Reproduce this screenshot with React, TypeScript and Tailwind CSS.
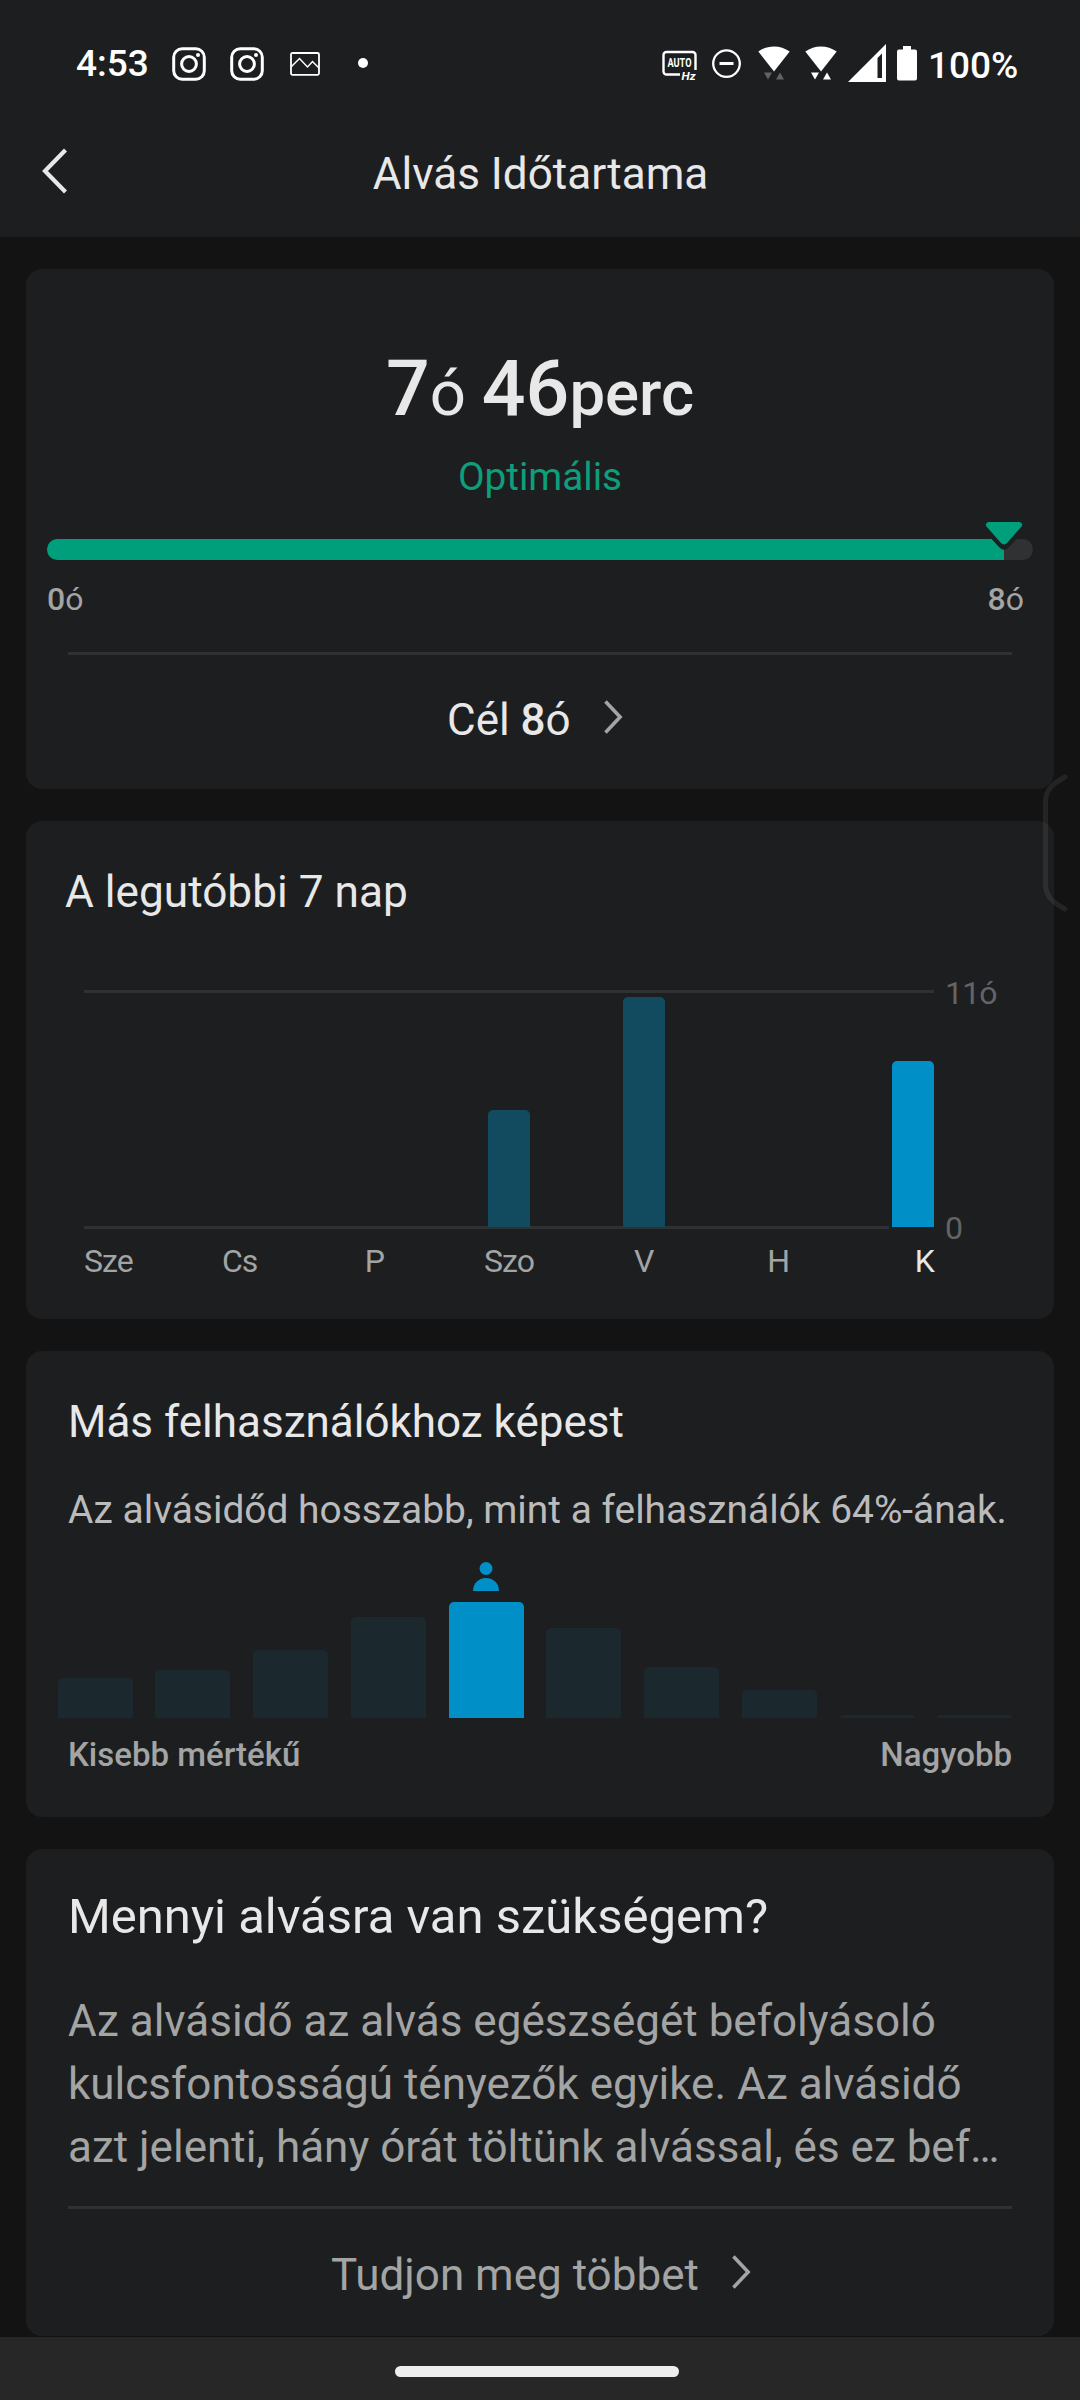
import type { ReactNode } from "react";

function InstagramIcon() {
  return (
    <svg className="h-[34px] w-[34px]" viewBox="0 0 34 34" fill="none" stroke="#fff" strokeWidth="3">
      <rect x="1.7" y="1.7" width="30.6" height="30.6" rx="8.5" />
      <circle cx="17" cy="17" r="7.4" />
      <circle cx="26" cy="8" r="2" fill="#fff" stroke="none" />
    </svg>
  );
}

function WifiIcon({ active }: { active: boolean }) {
  const arrows = active ? "#fff" : "#626365";
  return (
    <svg className="h-[34px] w-[32px]" viewBox="0 0 32 34" fill="#fff">
      <path d="M.3 5.6C9.5-1.3 22.5-1.3 31.7 5.6L16 25.4Z" />
      <path d="M6 26.5h8l-4 7Z" fill={arrows} />
      <path d="M18 33.5h8l-4-7Z" fill={arrows} />
    </svg>
  );
}

function StatusBar() {
  return (
    <div className="flex h-[126px] items-start pl-[76px] pt-[44px] text-white">
      <span className="mt-[-1px] h-[42px] w-[96px] whitespace-nowrap text-[37px] font-medium leading-[42px]">4:53</span>
      <div className="mt-[3px]">
        <InstagramIcon />
      </div>
      <div className="ml-[24px] mt-[3px]">
        <InstagramIcon />
      </div>
      <svg className="ml-[26px] mt-[8px] h-[24px] w-[30px]" viewBox="0 0 30 24" fill="none" stroke="#fff" strokeWidth="1.8">
        <rect x="1" y="1" width="28" height="21.8" rx="1.5" />
        <path d="M1 15 9.500 6.500 17.500 15 22.500 9.500 29 16" strokeWidth="1.5" />
      </svg>
      <div className="ml-[38px] mt-[14px] h-[10px] w-[10px] rounded-full bg-white" />

      <svg className="ml-[294px] mt-[6px] h-[36px] w-[36px] overflow-visible" viewBox="0 0 36 36" fill="none">
        <path d="M18 24.500H4.500a3 3 0 0 1-3-3V5a3 3 0 0 1 3-3H30.500a3 3 0 0 1 3 3V20" stroke="#fff" strokeWidth="2.400" />
        <text x="17.500" y="17.300" fill="#fff" fontSize="12.500" fontWeight="700" textAnchor="middle" textLength="24" lengthAdjust="spacingAndGlyphs" fontFamily="Roboto, sans-serif">AUTO</text>
        <text x="19.500" y="29.500" fill="#fff" fontSize="11" fontWeight="700" fontStyle="italic" textLength="14" lengthAdjust="spacingAndGlyphs" fontFamily="Roboto, sans-serif">Hz</text>
      </svg>
      <svg className="ml-[14px] mt-[5px] h-[30px] w-[30px]" viewBox="0 0 30 30" fill="none" stroke="#fff">
        <circle cx="14.500" cy="14.600" r="13.300" strokeWidth="2.300" />
        <path d="M7.500 14.500h14" strokeWidth="3" />
      </svg>
      <div className="ml-[16px] mt-[2px]">
        <WifiIcon active={false} />
      </div>
      <div className="ml-[15px] mt-[2px]">
        <WifiIcon active />
      </div>
      <svg className="ml-[11px] h-[38px] w-[38px]" viewBox="0 0 38 38">
        <path fill="#fff" fillRule="evenodd" d="M38 0V38H0ZM34 9.500 29.500 14V34H34Z" />
      </svg>
      <svg className="ml-[11px] mt-[2px] h-[35px] w-[20px]" viewBox="0 0 20 35" fill="#fff">
        <path d="M6 0h8v3.500h4a2 2 0 0 1 2 2V32.500a2 2 0 0 1-2 2H2a2 2 0 0 1-2-2V5.500a2 2 0 0 1 2-2H6Z" />
      </svg>
      <span className="ml-[11px] mt-px h-[42px] whitespace-nowrap text-[37px] font-medium leading-[42px]">100%</span>
    </div>
  );
}

function Chevron({ className }: { className: string }) {
  return (
    <svg className={className} viewBox="0 0 20 36" fill="none" stroke="#a3a4a4" strokeWidth="3.800">
      <path d="M1.500 1.700 17 18 1.500 34.300" />
    </svg>
  );
}

function Card({ className, children }: { className: string; children: ReactNode }) {
  return <section className={`shrink-0 rounded-[16px] bg-[#1d1e20] ${className}`}>{children}</section>;
}

function DurationCard() {
  return (
    <Card className="h-[520px] pt-[76px]">
      <div className="flex h-[88px] items-baseline justify-center whitespace-nowrap leading-[88px] text-[#e8e8e8]">
        <span className="text-[77px] font-medium">7</span>
        <span className="text-[63.5px]">ó</span>
        <span className="ml-[16px] text-[77px] font-medium">46</span>
        <span className="text-[63.5px] font-medium">perc</span>
      </div>
      <p className="mt-[21px] text-center text-[38.7px] leading-[46px] text-[#0d9e7b]">Optimális</p>
      <div className="relative mx-[21px] mt-[39px] flex h-[21px] overflow-visible rounded-full bg-[#303133]">
        <div className="h-full w-[957px] rounded-l-full bg-[#009f7c]" />
        <svg className="absolute left-[932px] top-[-20px] h-[36px] w-[50px]" viewBox="0 0 50 36">
          <path d="M4 0H46L46 11 29.500 28.500Q25 33 20.500 28.500L4 11Z" fill="#1d1e20" />
          <path d="M9.500 3H40.500Q44.500 4 42.500 7.500L28.500 23.500Q25 27.500 21.500 23.500L7.500 7.500Q5.500 4 9.500 3Z" fill="#009f7c" />
        </svg>
      </div>
      <div className="mt-5 flex justify-between pl-[21px] pr-[30px] text-[32px] leading-[38px] text-[#a3a4a4]">
        <span><span className="font-medium">0</span>ó</span>
        <span><span className="font-medium">8</span>ó</span>
      </div>
      <div className="mx-[42px] mt-[34px] h-[3px] bg-[#303133]" />
      <button className="ml-[421px] mt-[39px] flex h-[52px] items-start whitespace-nowrap text-[44px] leading-[52px] text-[#e8e8e8]">
        <span>Cél <span className="font-medium">8</span>ó</span>
        <Chevron className="ml-[33px] mt-[6px] h-[34px] w-[19px]" />
      </button>
    </Card>
  );
}

const week = [
  { day: "Sze", height: 0 },
  { day: "Cs", height: 0 },
  { day: "P", height: 0 },
  { day: "Szo", height: 117 },
  { day: "V", height: 230 },
  { day: "H", height: 0 },
  { day: "K", height: 166.5 },
];

function WeekCard() {
  return (
    <Card className="h-[498px] pt-[45px]">
      <h2 className="ml-[39px] text-[44.2px] leading-[52px] text-[#e8e8e8]">A legutóbbi 7 nap</h2>
      <div className="ml-[58px] mt-[72px] flex h-[239px]">
        <div className="relative w-[850px] border-t-[3px] border-[#303133]">
          <div className="absolute bottom-0 left-0 h-[3px] w-[805px] bg-[#303133]" />
          <div className="relative flex h-[234px] items-end justify-between">
            {week.map(({ day, height }) => (
              <div
                key={day}
                className={`w-[42px] rounded-t-[5px] ${day === "K" ? "bg-[#008fc7]" : "bg-[#124a5f]"}`}
                style={{ height }}
              />
            ))}
          </div>
        </div>
        <div className="-mt-4 ml-[11px] flex h-[273px] flex-col justify-between text-[32px] leading-[38px] tracking-[-0.8px] text-[#636466]">
          <span>11ó</span>
          <span>0</span>
        </div>
      </div>
      <div className="ml-[58px] mt-[13px] flex w-[850px] justify-between text-[32px] leading-[38px] tracking-[-0.9px] text-[#a3a4a4]">
        {week.map(({ day }) => (
          <span
            key={day}
            className={`flex w-[42px] justify-center whitespace-nowrap first:justify-start last:justify-end ${day === "K" ? "text-[#e8e8e8]" : ""}`}
          >
            {day}
          </span>
        ))}
      </div>
    </Card>
  );
}

const distribution = [40.5, 48, 68.5, 101.5, 116.5, 90.5, 51.5, 28, 3.5, 3.5];

function CompareCard() {
  return (
    <Card className="h-[466px] pt-[45px]">
      <h2 className="ml-[42px] whitespace-nowrap text-[44px] leading-[52px] text-[#e8e8e8]">Más felhasználókhoz képest</h2>
      <p className="ml-[42px] mt-[38px] whitespace-nowrap text-[38.9px] leading-[48px] text-[#bbbbbc]">
        Az alvásidőd hosszabb, mint a felhasználók 64%-ának.
      </p>
      <div className="ml-[31.500px] mt-[28px] flex h-[156px] w-[955px] items-end justify-between">
        {distribution.map((height, i) => (
          <div key={i} className="flex w-[75px] flex-col items-center">
            {i === 4 && (
              <svg className="mb-[10.500px] h-[29px] w-[26px]" viewBox="0 0 26 29" fill="#008fc7">
                <circle cx="13" cy="6.500" r="6.500" />
                <path d="M0 29C0 21.500 5.500 16 13 16S26 21.500 26 29Z" />
              </svg>
            )}
            <div
              className={`w-full rounded-t-[5px] ${i === 4 ? "bg-[#008fc7]" : "bg-[#1b292f]"}`}
              style={{ height }}
            />
          </div>
        ))}
      </div>
      <div className="mx-[42px] mt-[18px] flex justify-between text-[33px] font-medium leading-[38px] text-[#a3a4a4]">
        <span>Kisebb mértékű</span>
        <span>Nagyobb</span>
      </div>
    </Card>
  );
}

function InfoCard() {
  return (
    <Card className="h-[487px] pt-[40px]">
      <h2 className="ml-[42px] whitespace-nowrap text-[49px] leading-[56px] text-[#e8e8e8]">Mennyi alvásra van szükségem?</h2>
      <p className="ml-[42px] mt-[45px] whitespace-nowrap text-[44px] leading-[63px] text-[#a3a4a4]">
        Az alvásidő az alvás egészségét befolyásoló
        <br />
        kulcsfontosságú tényezők egyike. Az alvásidő
        <br />
        azt jelenti, hány órát töltünk alvással, és ez bef…
      </p>
      <div className="mx-[42px] mt-[27px] h-[3px] bg-[#303133]" />
      <button className="ml-[305px] mt-[40px] flex h-[52px] items-start whitespace-nowrap text-[44px] leading-[52px] text-[#a3a4a4]">
        <span>Tudjon meg többet</span>
        <Chevron className="ml-[33px] mt-[6px] h-[34px] w-[19px]" />
      </button>
    </Card>
  );
}

export default function App() {
  return (
    <div className="relative flex h-[2400px] w-[1080px] flex-col overflow-hidden bg-[#131313] font-['Roboto',sans-serif]">
      <header className="h-[237px] shrink-0 bg-[#1d1e20]">
        <StatusBar />
        <div className="relative flex h-[88px] justify-center pt-[22px]">
          <svg className="absolute left-[42px] top-[22px] h-[46px] w-[26px]" viewBox="0 0 26 46" fill="none" stroke="#e8e8e8" strokeWidth="4.200">
            <path d="M23.500 2 3 23 23.500 44" />
          </svg>
          <h1 className="whitespace-nowrap pl-px text-[44.1px] leading-[52px] text-[#e8e8e8]">Alvás Időtartama</h1>
        </div>
      </header>
      <main className="flex h-[2100px] shrink-0 flex-col gap-8 px-[26px] pt-8">
        <DurationCard />
        <WeekCard />
        <CompareCard />
        <InfoCard />
      </main>
      <footer className="flex h-[63px] shrink-0 justify-center bg-[#272727] pt-[29px]">
        <div className="mr-[6px] h-[11px] w-[284px] rounded-full bg-[#eeeeee]" />
      </footer>
      <svg className="absolute left-[1040px] top-[772px] h-[142px] w-[30px] opacity-[0.07]" viewBox="0 0 30 142" fill="none" stroke="#fff" strokeWidth="5" strokeLinecap="round">
        <path d="M25 5C14 11 5.500 17 5.500 30V112C5.500 125 14 131 25 137" />
      </svg>
    </div>
  );
}
